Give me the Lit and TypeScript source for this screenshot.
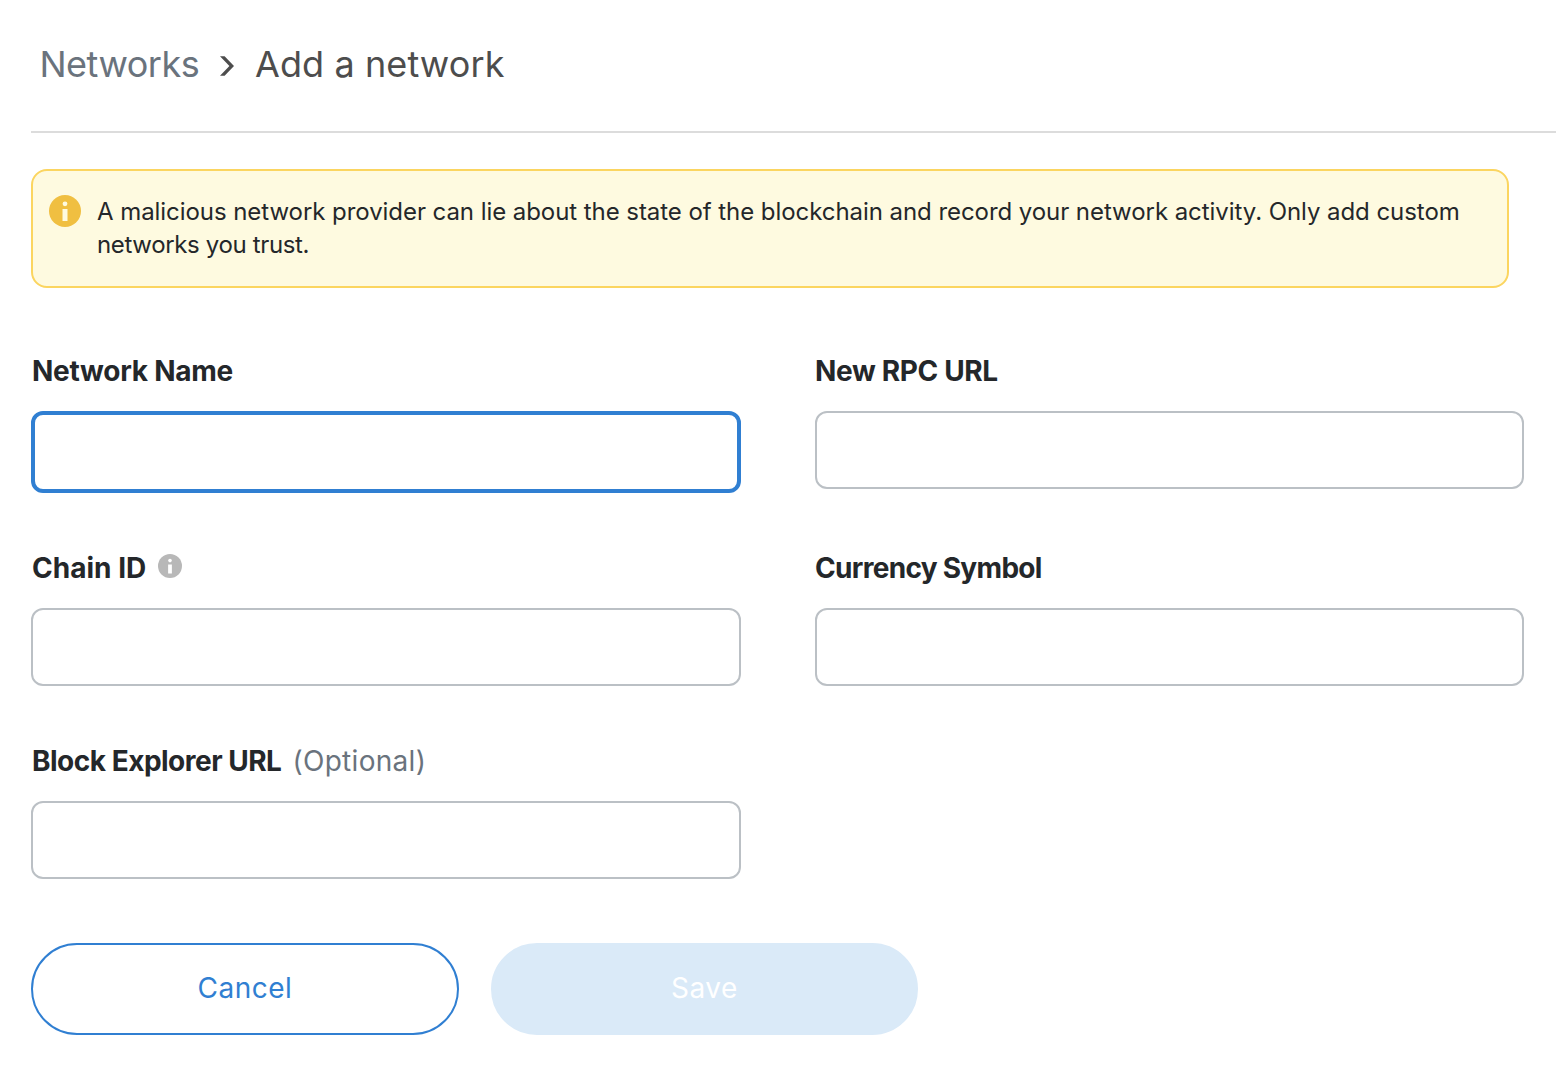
import { LitElement, html, svg, css } from "lit";
import { customElement, property } from "lit/decorators.js";

@customElement("info-icon")
export class InfoIcon extends LitElement {
  static styles = css`
    :host { display: block; }
    .icon { display: block; width: 100%; height: 100%; fill: currentColor; }
    .glyph { fill: var(--glyph, #fff); }
  `;
  render() {
    return html`<svg class="icon" viewBox="0 0 32 32" aria-hidden="true">
      ${svg`<circle cx="16" cy="16" r="16"></circle>
      <circle class="glyph" cx="16" cy="8.8" r="2.4"></circle>
      <rect class="glyph" x="13.5" y="14" width="5" height="12"></rect>`}
    </svg>`;
  }
}

@customElement("form-field")
export class FormField extends LitElement {
  @property() label = "";
  @property() hint = "";
  @property({ type: Boolean }) info = false;
  @property({ type: Boolean }) active = false;

  static styles = css`
    :host { display: block; }
    .label { display: flex; align-items: center; box-sizing: border-box; height: 40px; margin-bottom: 20px;
      font-size: 28px; font-weight: 700; line-height: 40px; color: #24272a; white-space: nowrap; }
    .name { padding-left: var(--inset, 1px); }
    .hint { margin-left: 11px; font-weight: 400; letter-spacing: 0.3px; color: #6a737d; }
    .info { width: 24px; height: 24px; margin: 0 0 4px 12px; color: #b8b8b8; }
    .input { display: block; box-sizing: border-box; width: 100%; height: 78px; margin: 0; padding: 0 20px;
      border: 2px solid #bbc0c5; border-radius: 12px; background: #fff; outline: none; font: inherit; font-size: 28px; }
    .input.active { height: 82px; border: 4px solid #307fd2; }
  `;
  render() {
    return html`
      <label class="label"><span class="name">${this.label}</span>
        ${this.info ? html`<info-icon class="info"></info-icon>` : null}
        ${this.hint ? html`<span class="hint">${this.hint}</span>` : null}
      </label>
      <input class="input ${this.active ? "active" : ""}" type="text" aria-label=${this.label} />
    `;
  }
}

@customElement("app-root")
export class AppRoot extends LitElement {
  static styles = css`
    :host { display: block; box-sizing: border-box; width: 1556px; height: 1080px; overflow: hidden;
      background: #fff; font-family: Inter, "Liberation Sans", sans-serif; }
    .crumbs { display: flex; align-items: center; box-sizing: border-box; height: 133px; margin-left: 31px;
      padding: 0 0 4px 8.5px; border-bottom: 2px solid #dcdcdc; font-size: 36px; line-height: 48px; color: #4d4d4d; white-space: nowrap; }
    .parent { width: 180.5px; letter-spacing: -0.5px; color: #6a737d; }
    .current { letter-spacing: 0.1px; }
    .chevron { width: 14px; height: 20px; margin: 5px 21px 0 0; fill: #4d4d4d; }
    .alert { display: flex; box-sizing: border-box; width: 1478px; height: 119px; margin: 36px 0 0 31px; padding: 24px 16px;
      border: 2px solid #fbd560; border-radius: 16px; background: #fefae0; color: #24272a; font-size: 24px; line-height: 33px; white-space: nowrap; }
    .badge { flex: none; width: 32px; height: 32px; margin-right: 16px; color: #f0bf41; --glyph: #fefae0; }
    .first { letter-spacing: -0.06px; }
    .second { letter-spacing: -0.35px; }
    .grid { display: grid; grid-template-columns: 710px 709px; column-gap: 74px; padding: 63px 0 0 31px;
      grid-template-rows: 197px 193px 142px; }
    .network { letter-spacing: -0.25px; }
    .rpc { letter-spacing: -0.35px; --inset: 0px; }
    .chain { letter-spacing: 0.03px; }
    .symbol { letter-spacing: -0.7px; --inset: 0px; }
    .explorer { letter-spacing: -0.5px; }
    .actions { display: flex; gap: 32px; padding: 60px 0 0 31px; }
    .button { box-sizing: border-box; width: 428px; height: 92px; padding: 0 0 2px; border: 2px solid #307fd2; border-radius: 46px;
      background: #fff; color: #307fd2; font: inherit; font-size: 28px; line-height: 40px; letter-spacing: 0.5px; }
    .save { width: 427px; border-color: #daeaf8; background: #daeaf8; color: #fff; }
  `;
  render() {
    return html`
      <nav class="crumbs">
        <span class="parent">Networks</span>
        <svg class="chevron" viewBox="0 0 14 20" aria-hidden="true"><path d="M0 0.3h4.6L14 10l-9.4 9.7H0L9.4 10z"></path></svg>
        <span class="current">Add a network</span>
      </nav>
      <section class="alert">
        <info-icon class="badge"></info-icon>
        <div class="message">
          <div class="first">A malicious network provider can lie about the state of the blockchain and record your network activity. Only add custom</div>
          <div class="second">networks you trust.</div>
        </div>
      </section>
      <main class="grid">
        <form-field class="network" label="Network Name" active></form-field>
        <form-field class="rpc" label="New RPC URL"></form-field>
        <form-field class="chain" label="Chain ID" info></form-field>
        <form-field class="symbol" label="Currency Symbol"></form-field>
        <form-field class="explorer" label="Block Explorer URL" hint="(Optional)"></form-field>
      </main>
      <div class="actions">
        <button class="button">Cancel</button>
        <button class="button save">Save</button>
      </div>
    `;
  }
}
